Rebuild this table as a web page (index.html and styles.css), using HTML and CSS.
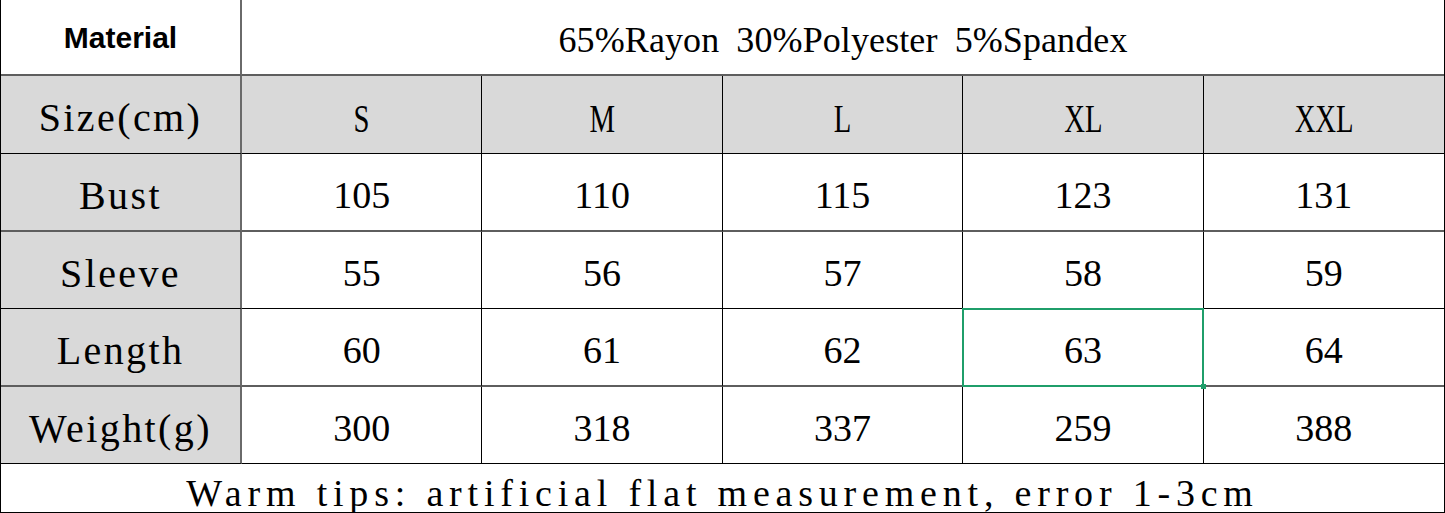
FILE: index.html
```html
<!DOCTYPE html>
<html>
<head>
<meta charset="utf-8">
<link rel="stylesheet" href="styles.css">
</head>
<body>
<div class="sheet">
  <div class="cell r1 head-label">Material</div>
  <div class="cell r1 span5 material">65%Rayon 30%Polyester 5%Spandex</div>

  <div class="cell r2 gray label">Size(cm)</div>
  <div class="cell r2 gray size"><span class="narrow">S</span></div>
  <div class="cell r2 gray size"><span class="narrow">M</span></div>
  <div class="cell r2 gray size"><span class="narrow">L</span></div>
  <div class="cell r2 gray size"><span class="narrow">XL</span></div>
  <div class="cell r2 gray size last"><span class="narrow">XXL</span></div>

  <div class="cell r3 gray label">Bust</div>
  <div class="cell r3 num">105</div>
  <div class="cell r3 num">110</div>
  <div class="cell r3 num">115</div>
  <div class="cell r3 num">123</div>
  <div class="cell r3 num last">131</div>

  <div class="cell r4 gray label">Sleeve</div>
  <div class="cell r4 num">55</div>
  <div class="cell r4 num">56</div>
  <div class="cell r4 num">57</div>
  <div class="cell r4 num">58</div>
  <div class="cell r4 num last">59</div>

  <div class="cell r5 gray label">Length</div>
  <div class="cell r5 num">60</div>
  <div class="cell r5 num">61</div>
  <div class="cell r5 num">62</div>
  <div class="cell r5 num selected">63</div>
  <div class="cell r5 num last">64</div>

  <div class="cell r6 gray label">Weight(g)</div>
  <div class="cell r6 num">300</div>
  <div class="cell r6 num">318</div>
  <div class="cell r6 num">337</div>
  <div class="cell r6 num">259</div>
  <div class="cell r6 num last">388</div>

  <div class="cell r7 span6 tips">Warm tips: artificial flat measurement, error 1-3cm</div>
</div>
</body>
</html>
```

FILE: styles.css
```css
html, body {
  margin: 0;
  padding: 0;
  background: #ffffff;
}

.sheet {
  display: grid;
  width: 1445px;
  box-sizing: border-box;
  grid-template-columns: 241px repeat(5, 1fr);
  grid-template-rows: 76px 78px 78px 77px 78px 77px 49px;
  border-left: 1px solid #000;
  border-right: 1px solid #000;
  font-family: "Liberation Serif", "Times New Roman", serif;
  color: #000;
}

.cell {
  box-sizing: border-box;
  display: flex;
  align-items: center;
  justify-content: center;
  border-right: 1px solid #000;
  position: relative;
  white-space: nowrap;
}

.cell:first-child,
.cell.label {
  border-right: 2px solid #6a6a6a;
}

.cell.last,
.cell.span5,
.cell.span6 {
  border-right: none;
}

.r1 { border-bottom: 2px solid #5e5e5e; }
.r2 { border-bottom: 1px solid #000; }
.r3 { border-bottom: 2px solid #5e5e5e; }
.r4 { border-bottom: 1px solid #000; }
.r5 { border-bottom: 2px solid #5e5e5e; }
.r6 { border-bottom: 1px solid #000; }
.r7 { border-bottom: 1px solid #000; }

.span5 { grid-column: 2 / span 5; }
.span6 { grid-column: 1 / span 6; }

.gray { background: #d9d9d9; }

.head-label {
  font-family: "Liberation Sans", Arial, sans-serif;
  font-weight: bold;
  font-size: 30px;
  padding-top: 2px;
}

.material {
  font-size: 36px;
  letter-spacing: 0.1px;
  word-spacing: 8px;
  padding-top: 6px;
}

.label {
  font-size: 40px;
  letter-spacing: 2.4px;
  padding-top: 6px;
}

.size {
  font-size: 41px;
  padding-top: 6px;
}

.narrow {
  display: inline-block;
  transform: scaleX(0.7);
}

.num {
  font-size: 38px;
  padding-top: 6px;
}

.tips {
  font-size: 38px;
  letter-spacing: 5.8px;
  padding-top: 10px;
}

.selected::after {
  content: "";
  position: absolute;
  left: -1px;
  top: -1px;
  right: -1px;
  bottom: -2px;
  border: 2px solid #1f9e6a;
}

.selected::before {
  content: "";
  position: absolute;
  right: -3px;
  bottom: -4px;
  width: 5px;
  height: 5px;
  background: #1f9e6a;
  z-index: 1;
}
```
